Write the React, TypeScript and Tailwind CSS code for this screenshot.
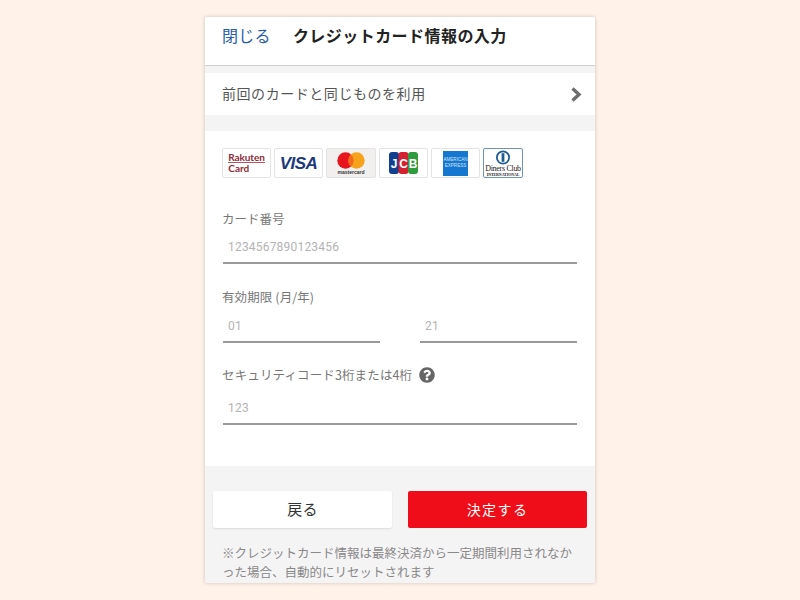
import { FaQuestionCircle } from 'react-icons/fa';

const FONT = "font-['Noto_Sans_CJK_JP','Noto_Sans',sans-serif]";

const LogoBox = ({ className = 'w-[49px] bg-white border-[#e3e3e3]', children }: { className?: string; children: React.ReactNode }) => (
    <div className={`h-[30px] rounded-[2px] border flex items-center justify-center overflow-hidden ${className}`}>
        {children}
    </div>
);

const RakutenLogo = () => (
    <div className="flex flex-col items-start font-['Lato',sans-serif] font-bold text-[10px] leading-[10px] text-[#8f2a38]">
        <span className="border-b border-[#b5525f] leading-[9px] tracking-[-0.1px]">Rakuten</span>
        <span>Card</span>
    </div>
);

const VisaLogo = () => (
    <span className="font-['Liberation_Sans',sans-serif] font-bold italic text-[17px] leading-none tracking-[-0.5px] text-[#1a3a7c]">VISA</span>
);

const MastercardLogo = () => (
    <div className="flex flex-col items-center">
        <svg width="28" height="17" viewBox="0 0 28 17">
            <circle cx="8.5" cy="8.5" r="8.2" fill="#e8141e" />
            <circle cx="19.5" cy="8.5" r="8.2" fill="#f7a21b" />
            <path d="M14 2.4a8.2 8.2 0 0 1 0 12.2a8.2 8.2 0 0 1 0-12.2z" fill="#f26a1b" />
        </svg>
        <span className="font-['Liberation_Sans',sans-serif] font-bold text-[5px] leading-[6px] text-[#333]">mastercard</span>
    </div>
);

const JcbLogo = () => (
    <svg width="29" height="22" viewBox="0 0 29 22">
        <rect x="0" y="0" width="10" height="22" rx="3" fill="#123f8e" />
        <rect x="9.5" y="0" width="10" height="22" rx="3" fill="#d3212f" />
        <rect x="19" y="0" width="10" height="22" rx="3" fill="#2e9b3d" />
        <text x="5" y="15.5" textAnchor="middle" fontFamily="Liberation Sans" fontWeight="700" fontSize="12" fill="#fff">J</text>
        <text x="14.5" y="15.5" textAnchor="middle" fontFamily="Liberation Sans" fontWeight="700" fontSize="12" fill="#fff">C</text>
        <text x="24" y="15.5" textAnchor="middle" fontFamily="Liberation Sans" fontWeight="700" fontSize="12" fill="#fff">B</text>
    </svg>
);

const AmexLogo = () => (
    <div className="h-[25px] w-[25px] bg-[#1577d0] flex flex-col items-center justify-center font-['Liberation_Sans',sans-serif] text-[4.6px] leading-[6px] text-[#cfe4f7]">
        <span>AMERICAN</span>
        <span>EXPRESS</span>
    </div>
);

const DinersLogo = () => (
    <div className="flex flex-col items-center font-['Liberation_Serif',serif] text-[#222]">
        <svg width="16" height="15" viewBox="0 0 16 15">
            <circle cx="8" cy="7.5" r="7" fill="#1d5c94" />
            <circle cx="8" cy="7.5" r="5.2" fill="#fff" />
            <rect x="6.6" y="3.2" width="2.8" height="8.6" fill="#1d5c94" />
        </svg>
        <span className="text-[8px] leading-[7px] tracking-[-0.3px]">Diners Club</span>
        <span className="text-[4px] leading-[5px] font-bold tracking-[-0.1px]">INTERNATIONAL</span>
    </div>
);

const Field = ({ value, className = '' }: { value: string; className?: string }) => (
    <div className={`h-[33px] border-b-2 border-[#9a9a9a] pl-[5px] flex items-center text-[12px] text-[#b3b3b3] tracking-[0.2px] font-['Roboto',sans-serif] ${className}`}>
        {value}
    </div>
);

export default function App() {
    return (
        <div className={`${FONT} h-[600px] overflow-hidden bg-[#fff2e9] pt-[17px]`}>
            <div className="mx-auto w-[390px] h-[566px] rounded-[2px] bg-[#f5f4f5] shadow-[0_0_4px_rgba(0,0,0,0.2)] overflow-hidden">
                <header className="h-[49px] bg-white border-b border-[#cfcfcf] flex items-start pl-[17px] pt-[5px]">
                    <span className="text-[16px] leading-[26px] tracking-[0.3px] text-[#2a5ca8]">閉じる</span>
                    <h1 className="ml-[22px] text-[16px] leading-[26px] font-bold tracking-[0.45px] text-[#222]">クレジットカード情報の入力</h1>
                </header>

                <div className="mt-[7px] h-[42px] bg-white flex items-center justify-between pl-[17px] pr-[13px]">
                    <span className="text-[14px] leading-[20px] -mt-[2px] tracking-[0.55px] text-[#555]">前回のカードと同じものを利用</span>
                    <svg width="12" height="15" viewBox="0 0 12 15">
                        <path d="M2.5 1.5L9 7.5L2.5 13.5" fill="none" stroke="#6e6e6e" strokeWidth="3.4" />
                    </svg>
                </div>

                <section className="mt-[16px] h-[335px] bg-white pl-[17px] pr-[18px] pt-[17px]">
                    <div className="flex items-center gap-[3px]">
                        <LogoBox><RakutenLogo /></LogoBox>
                        <LogoBox><VisaLogo /></LogoBox>
                        <LogoBox className="w-[50px] bg-[#f2f0ee] border-[#e3e3e3]"><MastercardLogo /></LogoBox>
                        <LogoBox><JcbLogo /></LogoBox>
                        <LogoBox><AmexLogo /></LogoBox>
                        <LogoBox className="w-[40px] bg-white border-[#6f93b3]"><DinersLogo /></LogoBox>
                    </div>

                    <label className="block mt-[31px] text-[12.5px] leading-[20px] text-[#777]">カード番号</label>
                    <Field value="1234567890123456" className="ml-[1px] mt-[2px]" />

                    <label className="block mt-[23px] text-[12.5px] leading-[20px] tracking-[0.1px] text-[#777]">有効期限 (月/年)</label>
                    <div className="ml-[1px] mt-[3px] grid grid-cols-2 gap-x-[40px]">
                        <Field value="01" />
                        <Field value="21" />
                    </div>

                    <div className="mt-[22px] flex items-center gap-[7px] text-[12.5px] leading-[20px] tracking-[0.13px] text-[#777]">
                        <label>セキュリティコード3桁または4桁</label>
                        <FaQuestionCircle className="h-[16px] w-[16px] text-[#666]" />
                    </div>
                    <Field value="123" className="ml-[1px] mt-[7px]" />
                </section>

                <div className="px-[8px] pt-[25px] grid grid-cols-2 gap-x-[16px]">
                    <button className="h-[37px] rounded-[2px] bg-white text-[15px] tracking-[0.3px] text-[#333] shadow-[0_1px_2px_rgba(0,0,0,0.1)]">戻る</button>
                    <button className="h-[37px] rounded-[2px] bg-[#ee0d18] text-[14px] tracking-[1.4px] text-white">決定する</button>
                </div>

                <p className="mt-[15px] pl-[17px] pr-[20px] text-[12.5px] leading-[19px] text-[#888]">
                    ※クレジットカード情報は最終決済から一定期間利用されなかった場合、自動的にリセットされます
                </p>
            </div>
        </div>
    );
}
